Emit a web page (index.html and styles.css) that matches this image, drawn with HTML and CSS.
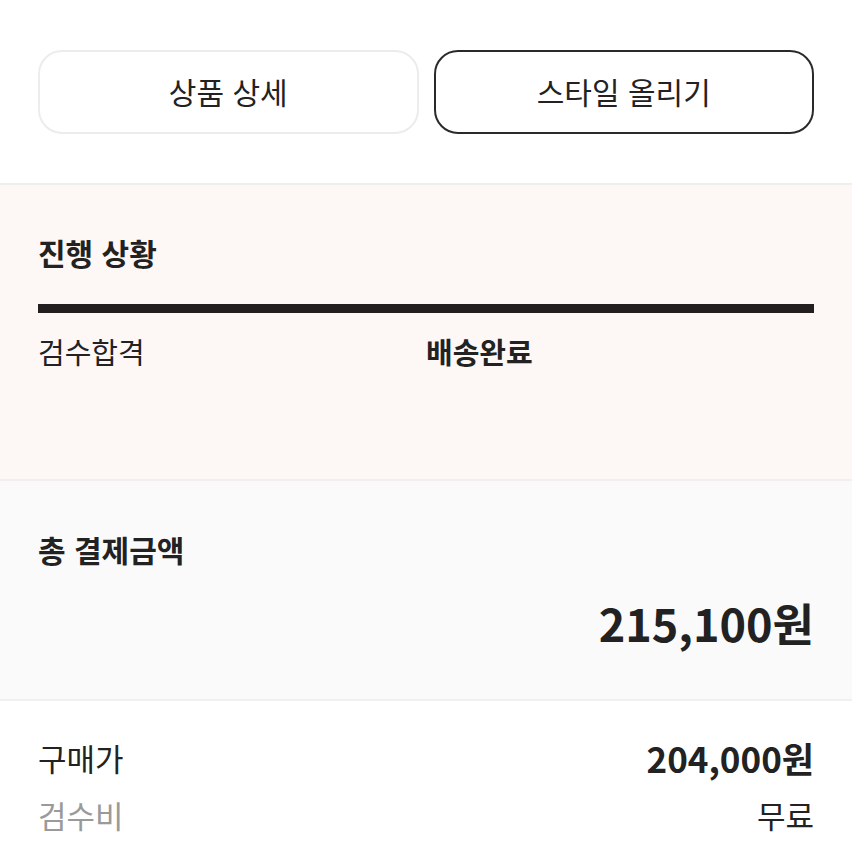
FILE: index.html
```html
<!DOCTYPE html>
<html lang="ko">
<head>
<meta charset="utf-8">
<link rel="stylesheet" href="styles.css">
</head>
<body>
<div class="page">
  <section class="actions">
    <button class="btn btn-light">상품 상세</button>
    <button class="btn btn-dark">스타일 올리기</button>
  </section>
  <section class="progress">
    <h2 class="title">진행 상황</h2>
    <div class="bar"></div>
    <div class="steps">
      <span class="step">검수합격</span>
      <span class="step step-current">배송완료</span>
    </div>
  </section>
  <section class="total">
    <h2 class="title">총 결제금액</h2>
    <div class="amount">215,100원</div>
  </section>
  <section class="details">
    <div class="row"><span class="label">구매가</span><span class="value strong">204,000원</span></div>
    <div class="row"><span class="label muted">검수비</span><span class="value">무료</span></div>
  </section>
</div>
</body>
</html>
```
FILE: styles.css
```css
* { box-sizing: border-box; }
html, body { margin: 0; padding: 0; background: #fff; }
body {
  font-family: "Noto Sans CJK KR", "Noto Sans", sans-serif;
  color: #222;
  width: 852px;
  height: 852px;
  overflow: hidden;
}
.page { display: flex; flex-direction: column; }
.actions {
  display: flex;
  gap: 15px;
  padding: 50px 38px 49px;
  border-bottom: 2px solid #eeeeee;
}
.btn {
  flex: 1;
  height: 84px;
  border-radius: 24px;
  background: #fff;
  font-family: inherit;
  font-size: 30px;
  line-height: 40px;
  color: #222;
  padding: 0 0 2px;
}
.btn-light { border: 2px solid #ececec; }
.btn-dark { border: 2px solid #2a2a2a; }
.progress {
  background: #fdf7f6;
  padding: 47px 38px 0;
  height: 296px;
  border-bottom: 2px solid #f1eeed;
}
.title {
  margin: 0;
  font-size: 30px;
  font-weight: 700;
  line-height: 40px;
}
.bar {
  margin-top: 32px;
  height: 9px;
  background: #231f1e;
}
.steps {
  display: grid;
  grid-template-columns: 1fr 1fr;
  margin-top: 20px;
}
.step { font-size: 29px; line-height: 36px; }
.step-current { font-weight: 700; }
.total {
  background: #fafafa;
  padding: 48px 38px 0;
  height: 220px;
  border-bottom: 2px solid #f0f0f0;
  display: flex;
  flex-direction: column;
}
.amount {
  margin-top: 24px;
  align-self: flex-end;
  font-size: 45px;
  font-weight: 700;
  line-height: 60px;
}
.details {
  padding: 36px 38px 0;
  display: flex;
  flex-direction: column;
  gap: 17px;
}
.row {
  display: flex;
  justify-content: space-between;
  align-items: center;
  height: 40px;
}
.label { font-size: 31px; }
.muted { color: #9a9a9a; }
.value { font-size: 31px; }
.strong { font-weight: 700; font-size: 35px; }
```
